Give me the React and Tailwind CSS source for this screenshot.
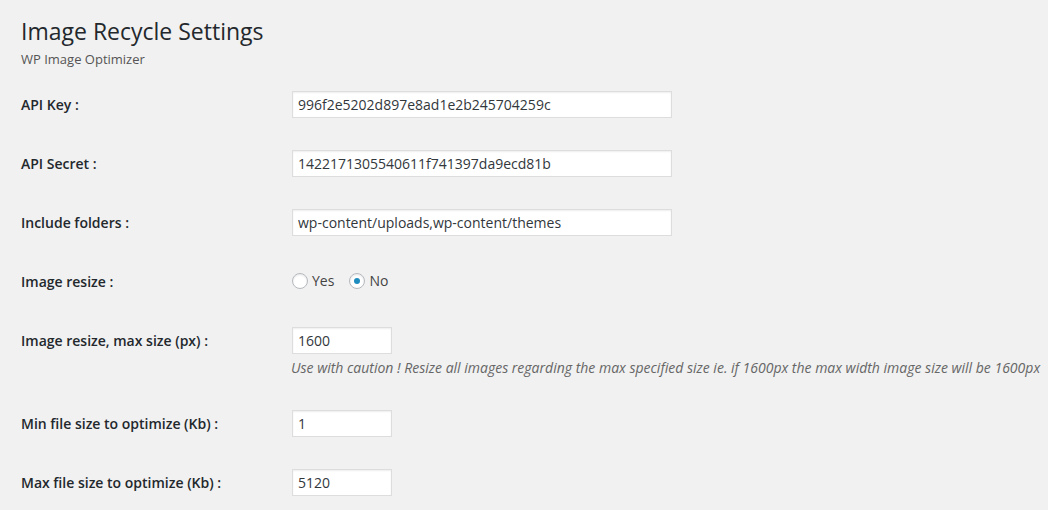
import React from 'react';

const font = { fontFamily: '"Open Sans", "Liberation Sans", sans-serif' };

const TextField = ({ value, wide }) => (
  <input
    type="text"
    defaultValue={value}
    className={
      (wide ? 'w-[380px]' : 'w-[100px]') +
      ' h-[27px] border border-[#dddddd] bg-white px-[5px] text-[14px] text-[#32373c] shadow-[inset_0_1px_2px_rgba(0,0,0,0.07)] outline-none'
    }
    style={font}
  />
);

const Radio = ({ checked, label }) => (
  <label className="flex items-center">
    <span className="flex h-[16px] w-[16px] items-center justify-center rounded-full border border-[#b4b9be] bg-white shadow-[inset_0_1px_2px_rgba(0,0,0,0.1)]">
      {checked && <span className="h-[6px] w-[6px] rounded-full bg-[#1e8cbe]" />}
    </span>
    <span className="ml-[4px] text-[14px] text-[#444]">{label}</span>
  </label>
);

const Row = ({ label, children, note }) => (
  <div className="flex py-[16px]">
    <div className="flex h-[27px] w-[271px] shrink-0 items-center text-[14px] font-semibold text-[#23282d]">
      {label}
    </div>
    <div>
      {children}
      {note && (
        <p className="-ml-[1px] mt-[4px] text-[14px] leading-[20px] italic text-[#666]">{note}</p>
      )}
    </div>
  </div>
);

export default function App() {
  return (
    <div className="min-h-screen bg-[#f1f1f1] pl-[21px]" style={font}>
      <h1 className="pt-[16px] text-[23px] leading-[30px] font-normal text-[#23282d]">
        Image Recycle Settings
      </h1>
      <p className="mt-[4px] text-[13px] leading-[18px] text-[#555]">WP Image Optimizer</p>

      <div className="mt-[7px]">
        <Row label="API Key :">
          <TextField wide value="996f2e5202d897e8ad1e2b245704259c" />
        </Row>
        <Row label="API Secret :">
          <TextField wide value="1422171305540611f741397da9ecd81b" />
        </Row>
        <Row label="Include folders :">
          <TextField wide value="wp-content/uploads,wp-content/themes" />
        </Row>
        <Row label="Image resize :">
          <div className="-mt-[1px] flex h-[27px] items-center gap-[15px]">
            <Radio label="Yes" />
            <Radio checked label="No" />
          </div>
        </Row>
        <Row
          label="Image resize, max size (px) :"
          note="Use with caution ! Resize all images regarding the max specified size ie. if 1600px the max width image size will be 1600px"
        >
          <TextField value="1600" />
        </Row>
        <Row label="Min file size to optimize (Kb) :">
          <TextField value="1" />
        </Row>
        <Row label="Max file size to optimize (Kb) :">
          <TextField value="5120" />
        </Row>
      </div>
    </div>
  );
}
